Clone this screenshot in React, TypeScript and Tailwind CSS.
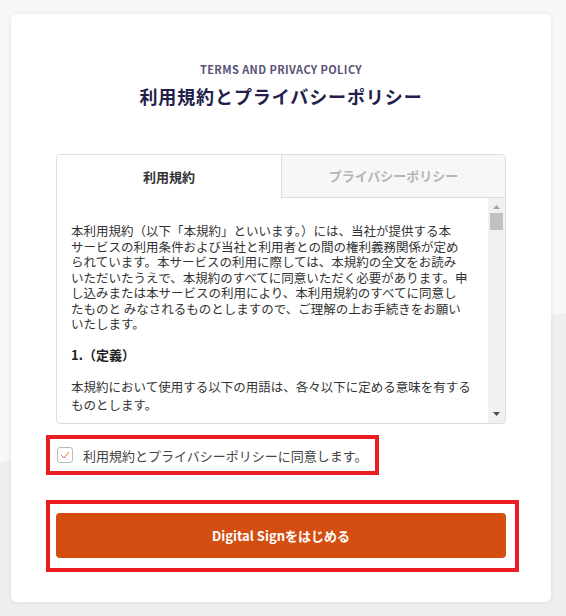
import { useState } from "react";

const termsLines = [
  "本利用規約（以下「本規約」といいます。）には、当社が提供する本",
  "サービスの利用条件および当社と利用者との間の権利義務関係が定め",
  "られています。本サービスの利用に際しては、本規約の全文をお読み",
  "いただいたうえで、本規約のすべてに同意いただく必要があります。申",
  "し込みまたは本サービスの利用により、本利用規約のすべてに同意し",
  "たものと みなされるものとしますので、ご理解の上お手続きをお願い",
  "いたします。",
];

const definitionLines = [
  "本規約において使用する以下の用語は、各々以下に定める意味を有する",
  "ものとします。",
];

const Lines = ({ lines, className }: { lines: string[]; className?: string }) => (
  <p className={`whitespace-nowrap ${className ?? ""}`}>
    {lines.map((line, i) => (
      <span key={i} className="block">
        {line}
      </span>
    ))}
  </p>
);

export default function App() {
  const [tab, setTab] = useState<"terms" | "privacy">("terms");
  const [agreed, setAgreed] = useState(true);

  return (
    <div
      className="relative min-h-[616px] bg-[#f8f8f8] pt-[14px] pr-[15px] pb-[14px] pl-[11px]"
      style={{ fontFamily: '"Noto Sans CJK JP", "Noto Sans", sans-serif' }}
    >
      {/* background wave */}
      <svg className="absolute inset-0 h-full w-full" viewBox="0 0 566 616" preserveAspectRatio="none">
        <path d="M0 463 C 200 410, 380 350, 566 313 L566 616 L0 616 Z" fill="#efefef" />
      </svg>

      <div className="relative flex h-[588px] flex-col items-center rounded-[6px] bg-white pt-[47px] shadow-[0_0_6px_rgba(0,0,0,0.08)]">
        <div className="text-[11px] leading-[16px] font-bold tracking-[0.4px] text-[#5a5276]">
          TERMS AND PRIVACY POLICY
        </div>
        <h1 className="mt-[6px] text-[18px] leading-[26px] font-bold tracking-[0.9px] text-[#231e4b]">
          利用規約とプライバシーポリシー
        </h1>

        {/* tab box */}
        <div className="mt-[45px] flex h-[270px] w-[450px] flex-col overflow-hidden rounded-[4px] border border-[#dddddd]">
          <div className="flex h-[43px] shrink-0 text-[13px] font-bold">
            <button
              onClick={() => setTab("terms")}
              className={`flex w-[224px] items-center justify-center ${
                tab === "terms" ? "bg-white text-[#333333]" : "border-b border-[#dddddd] bg-[#f7f7f7] text-[#b5b5b5]"
              }`}
            >
              利用規約
            </button>
            <button
              onClick={() => setTab("privacy")}
              className={`flex flex-1 items-center justify-center border-l border-[#dddddd] ${
                tab === "privacy" ? "bg-white text-[#333333]" : "border-b bg-[#f7f7f7] text-[#b5b5b5]"
              }`}
            >
              プライバシーポリシー
            </button>
          </div>

          <div className="flex min-h-0 flex-1">
            <div className="flex-1 overflow-hidden pt-[25px] pl-[14px] text-[12.5px] text-[#333333]">
              <Lines lines={termsLines} className="leading-[15.5px]" />
              <p className="mt-[14px] text-[13px] leading-[18px] font-bold text-[#222222]">1.（定義）</p>
              <Lines lines={definitionLines} className="mt-[14px] leading-[18.5px]" />
            </div>

            {/* scrollbar */}
            <div className="flex w-[17px] shrink-0 flex-col items-center bg-[#f1f1f1]">
              <svg width="9" height="6" viewBox="0 0 9 6" className="mt-[6px]">
                <path d="M4.5 1 L8 5 L1 5 Z" fill="#a3a3a3" />
              </svg>
              <div className="mt-[3px] h-[17px] w-[13px] bg-[#c1c1c1]" />
              <div className="flex-1" />
              <svg width="9" height="6" viewBox="0 0 9 6" className="mb-[6px]">
                <path d="M1 1 L8 1 L4.5 5 Z" fill="#505050" />
              </svg>
            </div>
          </div>
        </div>

        {/* agree checkbox */}
        <div className="mt-[11px] flex w-full pl-[35px]">
          <div
            onClick={() => setAgreed(!agreed)}
            className="flex h-[40px] cursor-pointer items-center gap-[10px] border-4 border-[#ea1c24] pr-[8px] pl-[7px]"
          >
            <span className="flex h-[16px] w-[16px] shrink-0 items-center justify-center rounded-[3px] border border-[#bbbbbb] bg-white">
              {agreed && (
                <svg width="10" height="8" viewBox="0 0 10 8">
                  <path d="M1 4 L4 7 L9 1" fill="none" stroke="#e0662b" strokeWidth="1" />
                </svg>
              )}
            </span>
            <span className="text-[13px] leading-[19px] whitespace-nowrap text-[#444444]">
              利用規約とプライバシーポリシーに同意します。
            </span>
          </div>
        </div>

        {/* start button */}
        <div className="mt-[25px] flex w-full pl-[35px]">
          <div className="border-4 border-[#ea1c24] pt-[9px] pr-[9px] pb-[10px] pl-[6px]">
            <button className="flex h-[45px] w-[450px] items-center justify-center rounded-[4px] bg-[#d44e12] text-[13px] font-bold text-white">
              Digital Signをはじめる
            </button>
          </div>
        </div>
      </div>
    </div>
  );
}
